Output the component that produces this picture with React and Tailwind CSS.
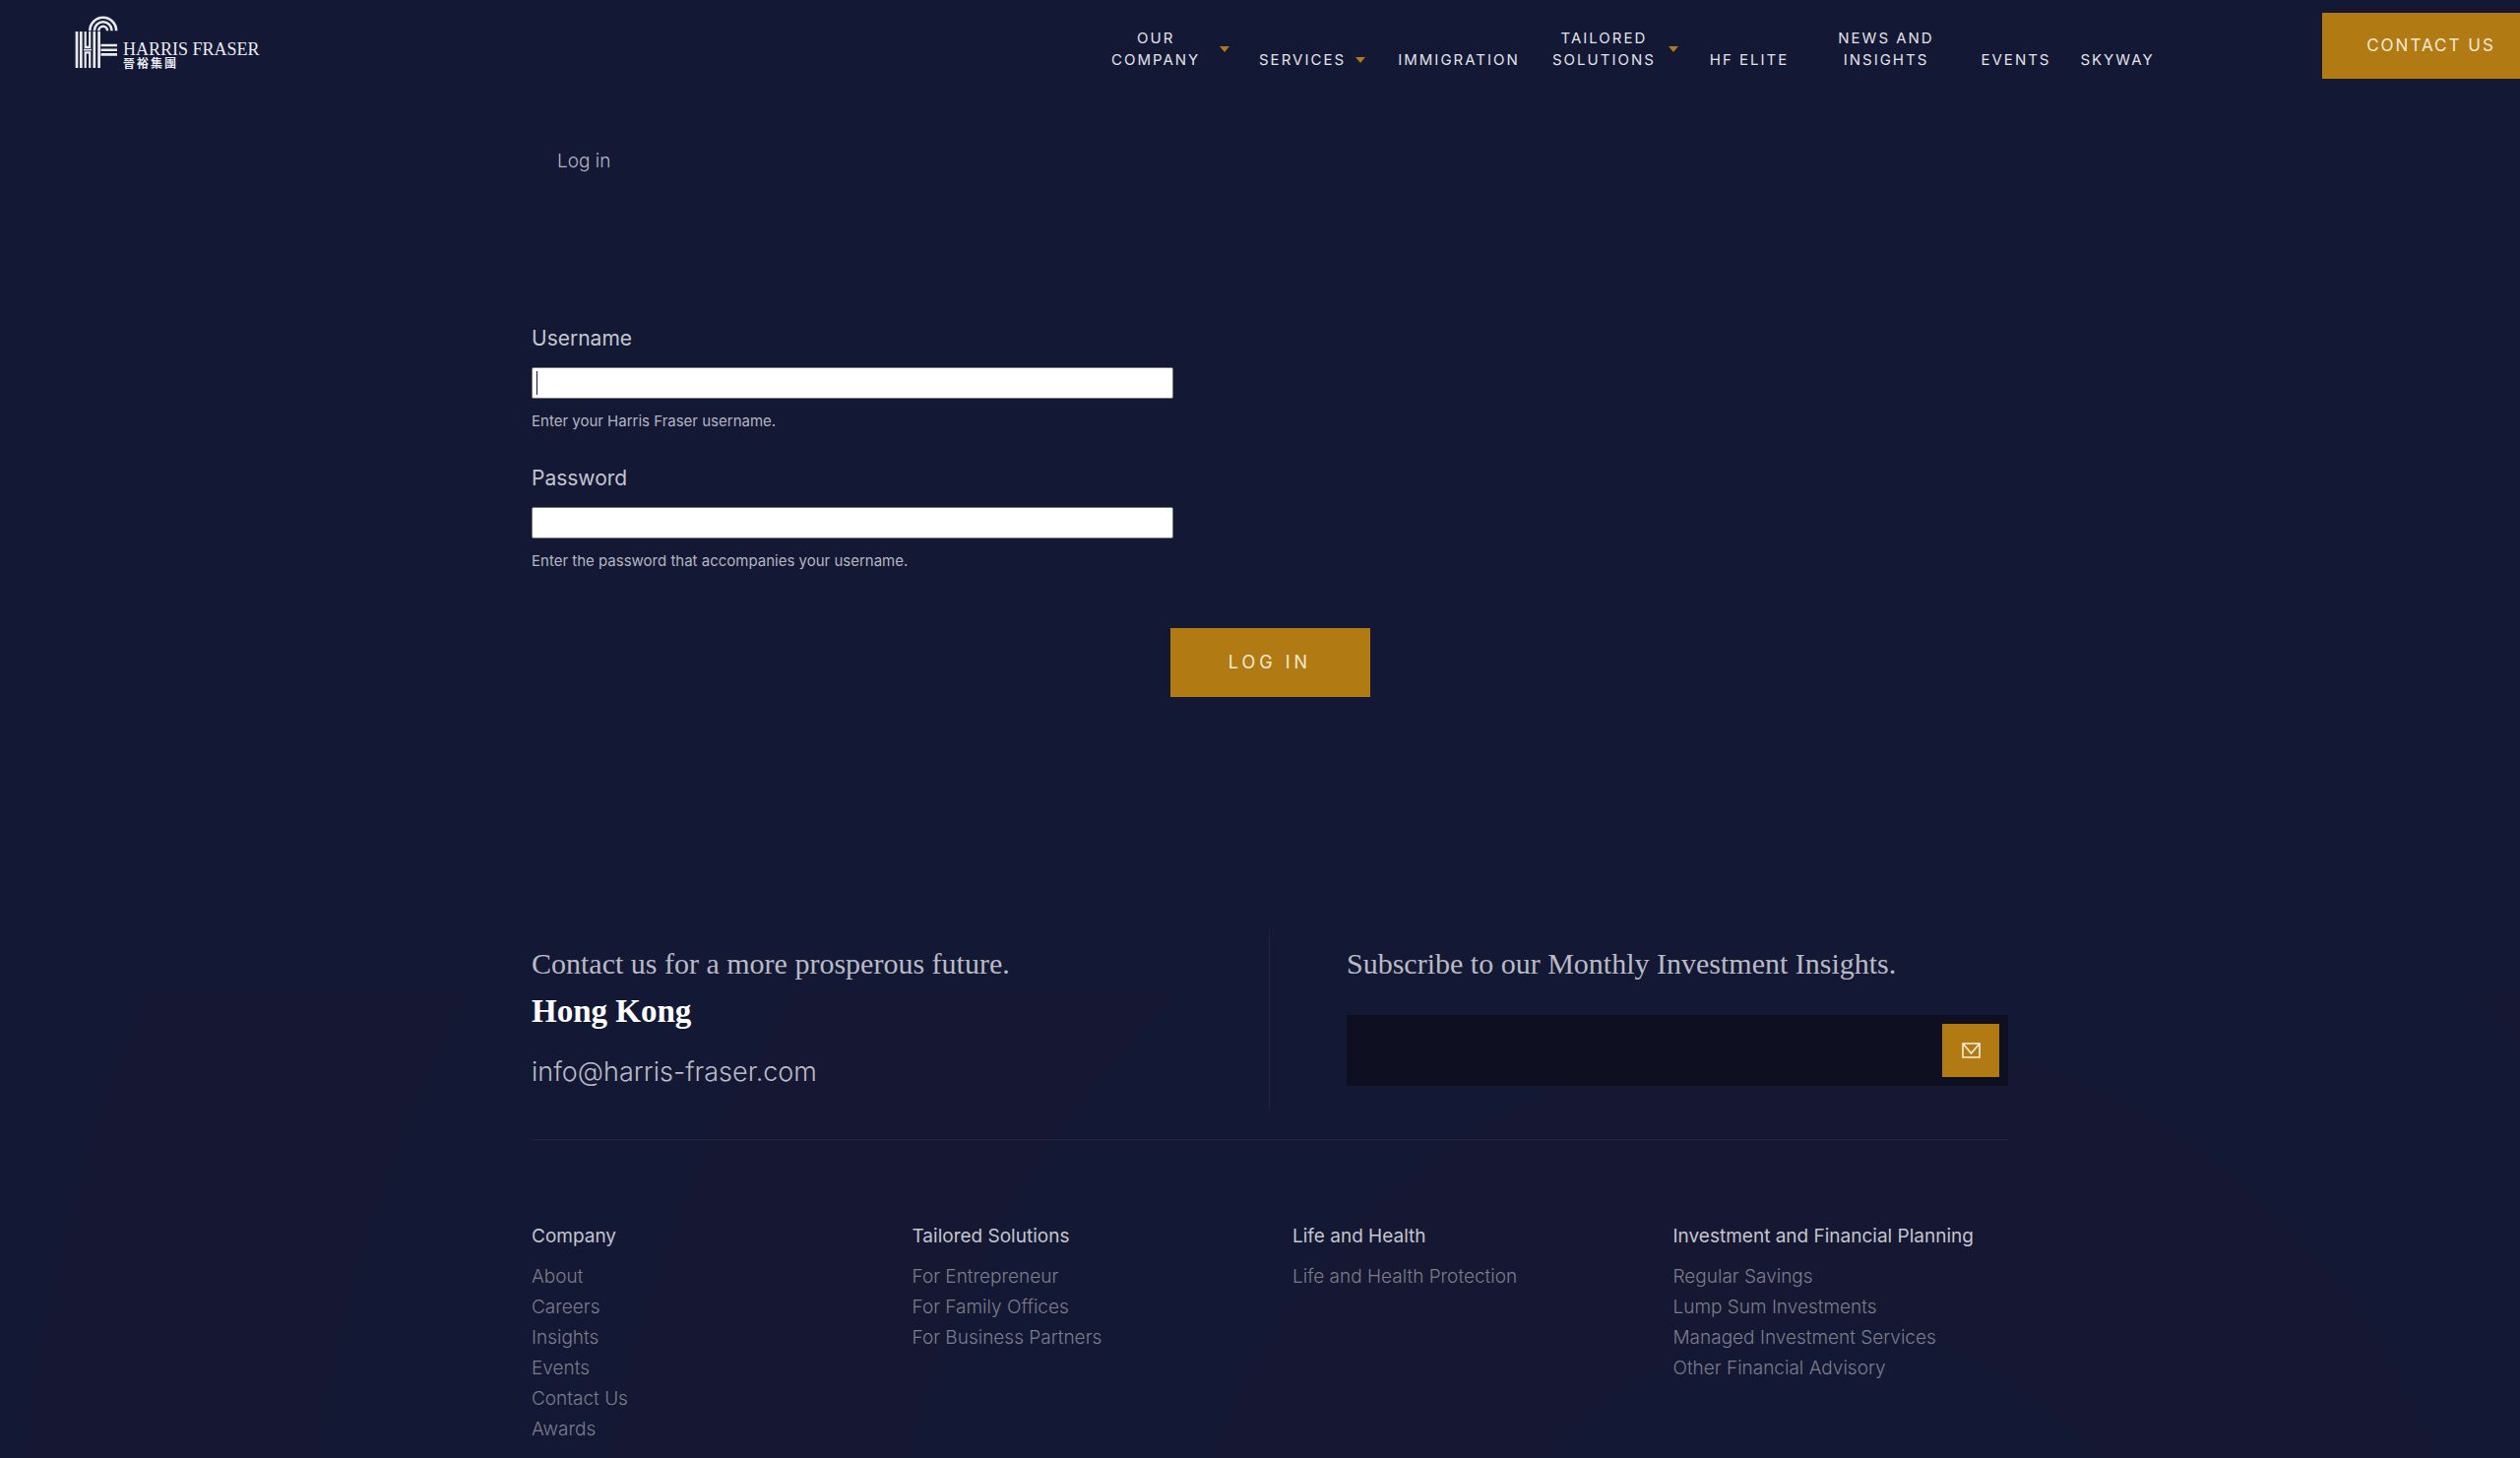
import React, { useState } from 'react';

const navItems = [
  { lines: ['OUR', 'COMPANY'], menu: true, box: 'w-[120px] justify-between' },
  { lines: ['SERVICES'], menu: true, box: 'w-[108px] justify-between' },
  { lines: ['IMMIGRATION'], box: 'w-[130px] justify-center' },
  { lines: ['TAILORED', 'SOLUTIONS'], menu: true, box: 'w-[128px] justify-between' },
  { lines: ['HF ELITE'], box: 'w-[84px] justify-center' },
  { lines: ['NEWS AND', 'INSIGHTS'], box: 'w-[134px] justify-center' },
  { lines: ['EVENTS'], box: 'w-[70px] justify-center' },
  { lines: ['SKYWAY'], box: 'w-[76px] justify-center' },
];

const footerColumns = [
  {
    title: 'Company',
    links: ['About', 'Careers', 'Insights', 'Events', 'Contact Us', 'Awards'],
  },
  {
    title: 'Tailored Solutions',
    links: ['For Entrepreneur', 'For Family Offices', 'For Business Partners'],
  },
  {
    title: 'Life and Health',
    links: ['Life and Health Protection'],
  },
  {
    title: 'Investment and Financial Planning',
    links: [
      'Regular Savings',
      'Lump Sum Investments',
      'Managed Investment Services',
      'Other Financial Advisory',
    ],
  },
];

function Logo() {
  return (
    <a href="#home" className="flex items-end" aria-label="Harris Fraser">
      <svg width="44" height="54" viewBox="0 0 44 54" fill="none" stroke="#e9eaf0">
        <g strokeWidth="2.6">
          <path d="M15.3 15.2a13.4 13.4 0 0 1 26.8 0" />
          <path d="M19.8 15.2a8.9 8.9 0 0 1 17.8 0" />
          <path d="M24.3 15.2a4.4 4.4 0 0 1 8.8 0" />
        </g>
        <path d="M2 16v37M6.3 16v37M19.8 16v37M24.6 16v37" strokeWidth="2.7" />
        <path d="M10.7 16v15.9h4.5V16M10.7 53V37.3h4.5V53" strokeWidth="2.2" />
        <path d="M9 34.6h8" strokeWidth="1.8" />
        <path d="M26.5 30h16.5M26.5 34.7h16.5M26.5 39.4h16.5" strokeWidth="2.6" />
      </svg>
      <span className="ml-[5px] flex flex-col text-[#e9eaf0]">
        <span className="font-['Liberation_Serif',serif] text-lg leading-4 whitespace-nowrap">HARRIS FRASER</span>
        <span className="font-['Noto_Sans_CJK_TC',sans-serif] text-xs leading-3 font-bold tracking-[2px]">晉裕集團</span>
      </span>
    </a>
  );
}

function Caret() {
  return (
    <svg width="10" height="6" viewBox="0 0 10 6" fill="#b27a13" className="shrink-0">
      <path d="M0 0h10L5 6z" />
    </svg>
  );
}

function Header() {
  return (
    <header className="flex items-start justify-between pl-[76px]">
      <div className="pt-4">
        <Logo />
      </div>
      <div className="flex items-start">
        <nav className="mr-[170px] flex items-end gap-[30px] pt-7">
          {navItems.map((item) => (
            <a
              key={item.lines.join(' ')}
              href="#nav"
              className={`flex items-center text-center text-[15px] leading-[22px] tracking-[2px] text-[#e2e3e8] ${item.box}`}
            >
              <span>
                {item.lines.map((line) => (
                  <span key={line} className="block whitespace-nowrap">{line}</span>
                ))}
              </span>
              {item.menu && <Caret />}
            </a>
          ))}
        </nav>
        <a
          href="#contact"
          className="mt-[13px] flex h-[67px] w-[201px] items-center justify-center bg-[#b27a13] pl-5 text-[17px] tracking-[2px] whitespace-nowrap text-[#f3ead8]"
        >
          CONTACT US
        </a>
      </div>
    </header>
  );
}

function Field({ id, label, type, hint, value, onChange, active }) {
  return (
    <div className="mb-9">
      <label htmlFor={id} className="block text-[21px] leading-6 text-[#c4c5cd]">
        {label}
      </label>
      <div className="relative mt-[17px] max-w-[652px]">
        <input
          id={id}
          type={type}
          value={value}
          onChange={onChange}
          aria-describedby={`${id}-hint`}
          className="block h-8 w-full rounded-xs border border-[#767676] bg-white px-1 text-[#141833] outline-none"
        />
        {active && !value && (
          <span className="pointer-events-none absolute top-1 left-[5px] h-6 w-px bg-[#141833]" />
        )}
      </div>
      <p id={`${id}-hint`} className="mt-[13px] text-[15px] leading-5 text-[#b5b6c0]">{hint}</p>
    </div>
  );
}

function LoginForm() {
  const [formData, setFormData] = useState({ username: '', password: '' });

  const handleInputChange = (e) => {
    setFormData({ ...formData, [e.target.id]: e.target.value });
  };

  return (
    <form onSubmit={(e) => e.preventDefault()} className="mt-[156px]">
      <Field
        id="username"
        type="text"
        label="Username"
        hint="Enter your Harris Fraser username."
        value={formData.username}
        onChange={handleInputChange}
        active
      />
      <Field
        id="password"
        type="password"
        label="Password"
        hint="Enter the password that accompanies your username."
        value={formData.password}
        onChange={handleInputChange}
      />
      <button
        type="submit"
        className="mx-auto mt-[58px] block h-[70px] w-[203px] bg-[#b27a13] text-lg tracking-[4px] text-[#f3ead8]"
      >
        LOG IN
      </button>
    </form>
  );
}

function Footer() {
  return (
    // faint concentric rings behind the lower part of the page
    <footer className="mt-[237px] flex-1 bg-[radial-gradient(circle_at_72.3%_697px,transparent_361px,#161733_362px,#161733_659px,transparent_660px,transparent_955px,#161733_956px,#161733_1250px,transparent_1251px,transparent_1545px,#161733_1546px,#161733_1840px,transparent_1841px)] bg-[position:0_64px] bg-no-repeat pb-3 pl-5">
      <div className="mx-auto w-full max-w-[1500px]">
        <div className="flex">
          <div className="h-[184px] w-1/2 border-r border-[#26213f] pt-3">
            <h2 className="font-['Liberation_Serif',serif] text-3xl leading-[44px] text-[#b9bac4]">
              Contact us for a more prosperous future.
            </h2>
            <h3 className="font-['Liberation_Serif',serif] text-[33px] leading-[52px] font-bold text-white">Hong Kong</h3>
            <a href="mailto:info@harris-fraser.com" className="mt-4 block text-[27px] leading-10 font-light text-[#b9bac4]">
              info@harris-fraser.com
            </a>
          </div>
          <div className="w-1/2 pt-3 pl-[78px]">
            <h2 className="font-['Liberation_Serif',serif] text-3xl leading-[44px] text-[#b9bac4]">
              Subscribe to our Monthly Investment Insights.
            </h2>
            <form onSubmit={(e) => e.preventDefault()} className="mt-[30px] flex h-[72px] items-center bg-[#0e1021] pr-[9px]">
              <input type="email" aria-label="Email address" className="h-full min-w-0 flex-1 bg-transparent px-5 text-xl text-white outline-none" />
              <button type="submit" aria-label="Subscribe" className="flex h-[54px] w-[58px] items-center justify-center bg-[#b27a13]">
                <svg width="19" height="16" viewBox="0 0 19 16" fill="none" stroke="#f6eedd" strokeWidth="1.6">
                  <path d="M1 1h17v14H1zM1 1l8.5 10L18 1" />
                </svg>
              </button>
            </form>
          </div>
        </div>
        <div className="mt-7 grid grid-cols-4 gap-x-[46px] border-t border-[#26213f] pt-[82px]">
          {footerColumns.map((column) => (
            <div key={column.title}>
              <h4 className="text-[19px] leading-[31px] whitespace-nowrap text-[#c4c5cd]">{column.title}</h4>
              <ul className="mt-2.5">
                {column.links.map((link) => (
                  <li key={link}>
                    <a href="#footer" className="block text-[19px] leading-[31px] font-light text-[#7c7d89]">{link}</a>
                  </li>
                ))}
              </ul>
            </div>
          ))}
        </div>
      </div>
    </footer>
  );
}

function App() {
  return (
    <div className="flex min-h-screen flex-col overflow-hidden bg-[#131834] font-['Inter',sans-serif]">
      <Header />
      <main className="mt-[72px] pl-5">
        <div className="mx-auto w-full max-w-[1500px]">
          <a href="#login" className="ml-[26px] inline-block text-[19px] leading-6 font-light text-[#b5b6c0]">Log in</a>
          <LoginForm />
        </div>
      </main>
      <Footer />
    </div>
  );
}

export default App;
